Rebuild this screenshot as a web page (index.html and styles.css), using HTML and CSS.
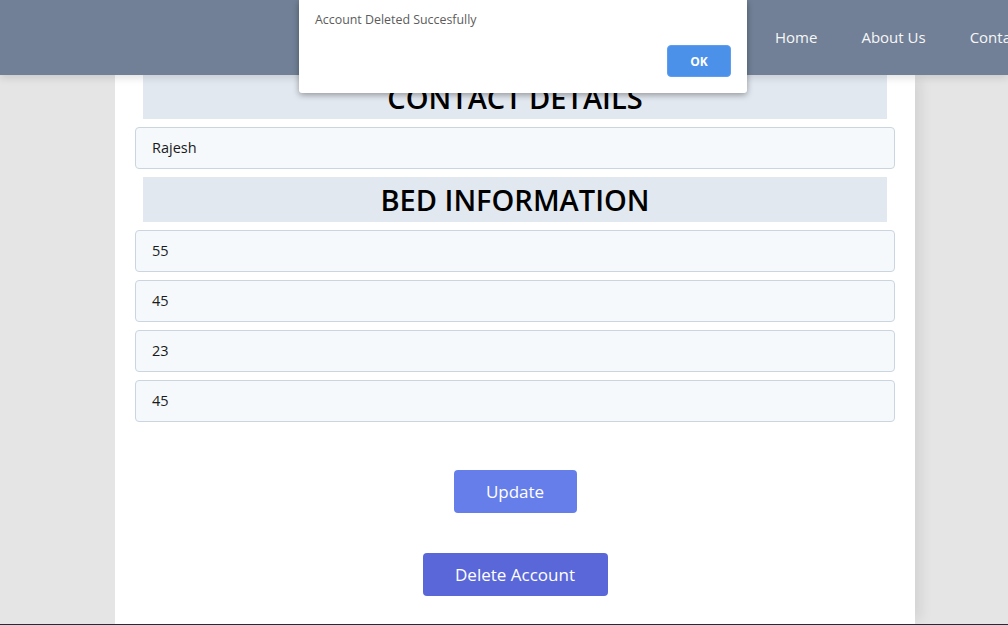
FILE: index.html
```html
<!DOCTYPE html>
<html lang="en">
<head>
<meta charset="utf-8">
<title>Account</title>
<link rel="stylesheet" href="styles.css">
</head>
<body>
<header class="topbar">
  <nav class="nav">
    <a class="nav-link" href="#">Home</a>
    <a class="nav-link" href="#">About Us</a>
    <a class="nav-link" href="#">Contact Us</a>
  </nav>
</header>
<main class="card">
  <h2 class="band band-first">CONTACT DETAILS</h2>
  <div class="field">Rajesh</div>
  <h2 class="band">BED INFORMATION</h2>
  <div class="field">55</div>
  <div class="field">45</div>
  <div class="field">23</div>
  <div class="field">45</div>
  <div class="actions">
    <button class="btn btn-update">Update</button>
    <button class="btn btn-delete">Delete Account</button>
  </div>
</main>
<footer class="foot"></footer>
<div class="dialog">
  <p class="dialog-msg">Account Deleted Succesfully</p>
  <div class="dialog-actions"><button class="dialog-ok">OK</button></div>
</div>
</body>
</html>
```
FILE: styles.css
```css
html, body {
  margin: 0;
  padding: 0;
}
body {
  background: #e5e5e5;
  font-family: "Open Sans", "Noto Sans", sans-serif;
  width: 1008px;
  height: 625px;
  overflow: hidden;
  position: relative;
}
.topbar {
  position: relative;
  z-index: 2;
  height: 75px;
  background: #718096;
  box-shadow: 0 3px 8px rgba(0, 0, 0, 0.12);
  display: flex;
  justify-content: flex-start;
  padding-left: 753px;
  white-space: nowrap;
}
.nav {
  display: flex;
  align-items: center;
  padding-bottom: 2px;
}
.nav-link {
  color: #f7f7f7;
  text-decoration: none;
  font-size: 15px;
  padding: 0 22px;
}
.card {
  width: 760px;
  margin: 0 0 0 115px;
  padding: 0 20px;
  height: 549px;
  background: #fff;
  box-shadow: 10px 0 12px -4px rgba(0, 0, 0, 0.08);
  display: flex;
  flex-direction: column;
  gap: 8px;
  box-sizing: content-box;
}
.band {
  margin: 0 8px;
  height: 45px;
  line-height: 46px;
  background: #e2e8f0;
  text-align: center;
  font-size: 29px;
  font-weight: 600;
  color: #000;
  letter-spacing: 0;
}
.band-first {
  height: 44px;
  margin-bottom: 0;
}
.field {
  height: 40px;
  line-height: 40px;
  border: 1px solid #cbd5e0;
  border-radius: 4px;
  background: #f5f9fc;
  padding: 0 16px;
  font-size: 14.5px;
  color: #1a1a1a;
}
.actions {
  display: flex;
  flex-direction: column;
  align-items: center;
  gap: 40px;
  padding-top: 40px;
}
.btn {
  border: none;
  border-radius: 4px;
  color: #fff;
  font-family: inherit;
  font-size: 17px;
  height: 43px;
  padding: 0 0;
}
.btn-update {
  background: #667eea;
  width: 123px;
}
.btn-delete {
  background: #5a67d8;
  width: 185px;
}
.foot {
  position: absolute;
  left: 0;
  right: 0;
  bottom: 0;
  height: 1px;
  background: #1f2d38;
}
.dialog {
  position: absolute;
  z-index: 5;
  top: 0;
  left: 299px;
  width: 448px;
  height: 93px;
  background: #fff;
  border-radius: 0 0 3px 3px;
  box-shadow: 0 2px 6px rgba(0, 0, 0, 0.35);
  box-sizing: border-box;
  padding: 11px 16px 16px 16px;
  display: flex;
  flex-direction: column;
  justify-content: space-between;
}
.dialog-msg {
  margin: 0;
  font-size: 12.4px;
  color: #5c5c5c;
}
.dialog-actions {
  display: flex;
  justify-content: flex-end;
}
.dialog-ok {
  width: 64px;
  height: 32px;
  border: 1px solid #5d9ef0;
  border-radius: 4px;
  background: #4b91ea;
  color: #fff;
  font-family: inherit;
  font-weight: 700;
  font-size: 12px;
}
```
